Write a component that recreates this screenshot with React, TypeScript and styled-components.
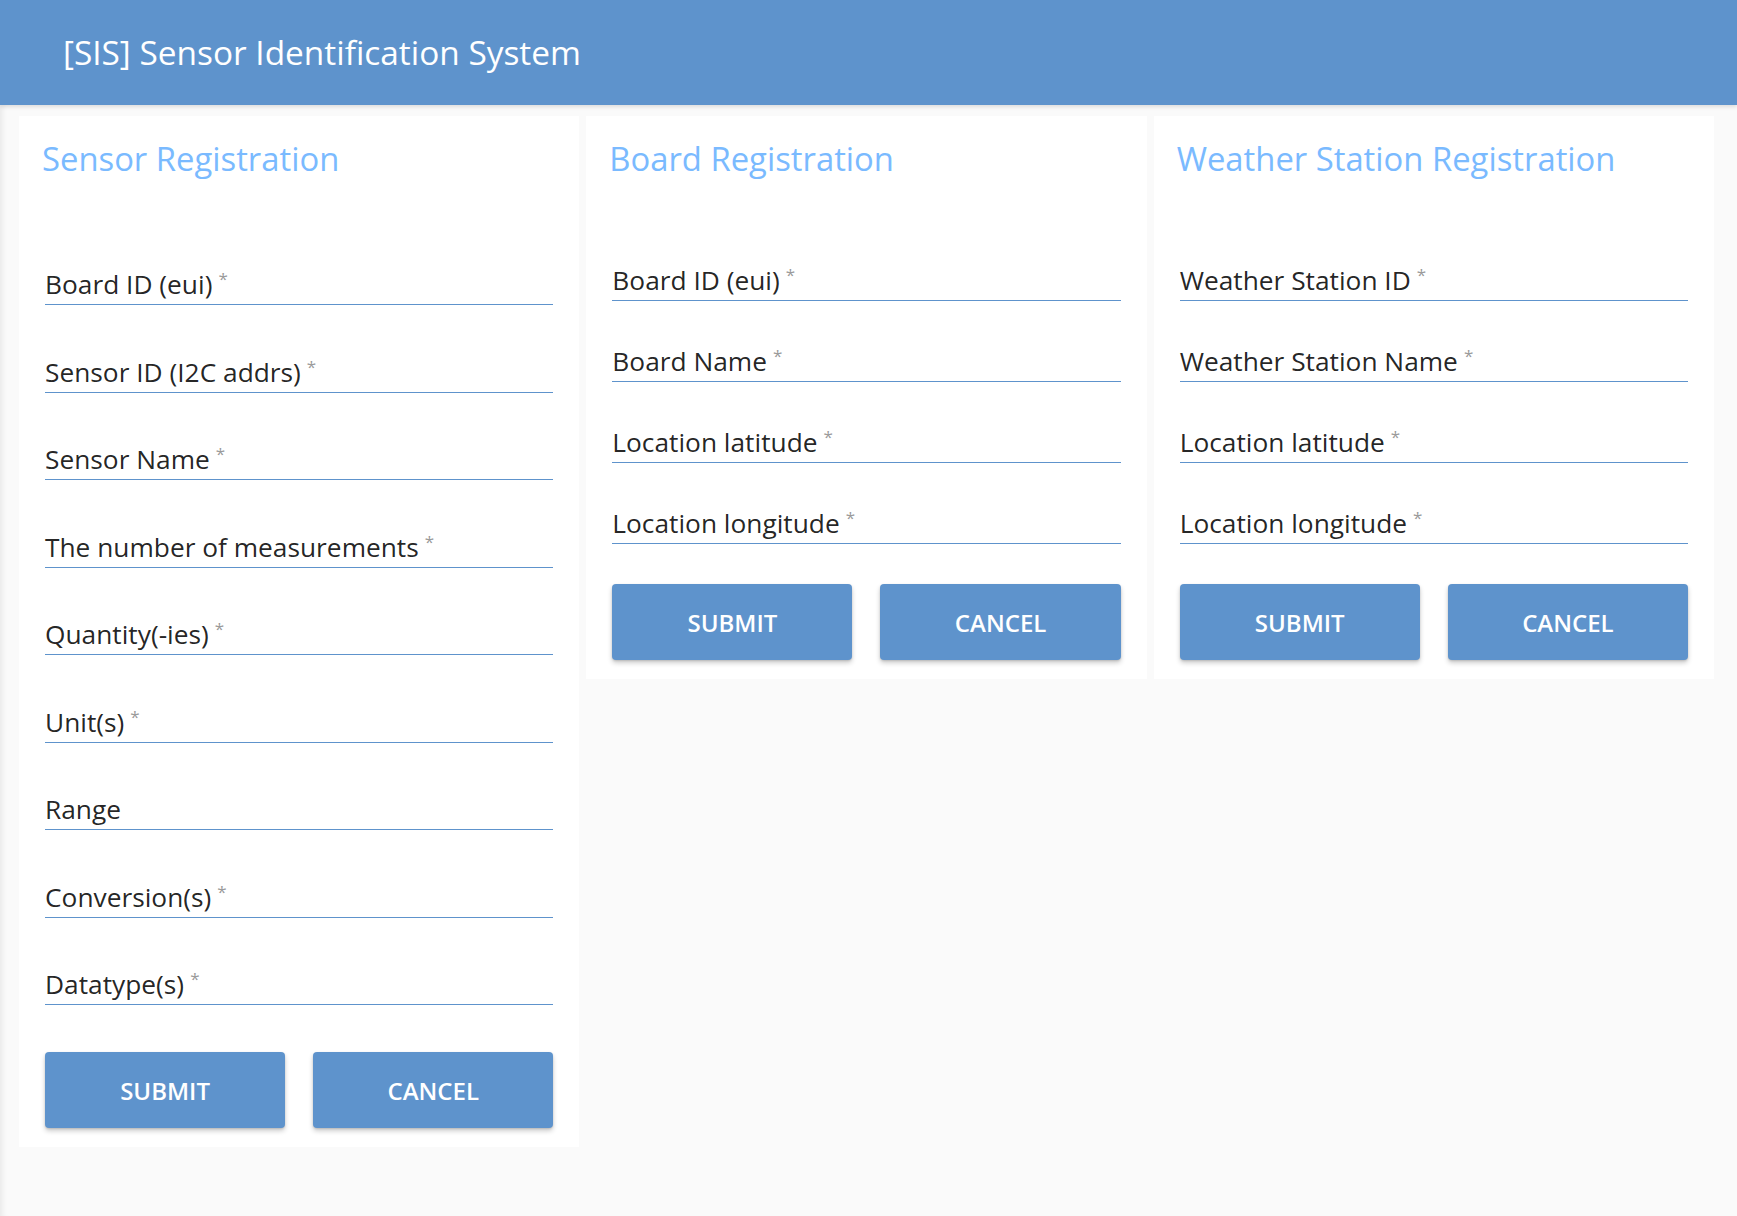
import React from "react";
import styled, { createGlobalStyle } from "styled-components";

const GlobalStyle = createGlobalStyle`
  html, body {
    margin: 0;
    padding: 0;
    background: #fafafa;
    font-family: "Open Sans", "Noto Sans", "Liberation Sans", sans-serif;
  }
  * { box-sizing: border-box; }
`;

const AppBar = styled.header`
  height: 105px;
  background: #5e93cc;
  display: flex;
  align-items: center;
  padding-left: 63px;
  box-shadow: 0 2px 4px rgba(0, 0, 0, 0.12);
  position: relative;
  z-index: 1;
`;

const AppTitle = styled.h1`
  margin: 0;
  color: #ffffff;
  font-size: 33.4px;
  font-weight: 400;
  line-height: 42px;
  padding-bottom: 2px;
`;

const Main = styled.main`
  display: grid;
  grid-template-columns: repeat(3, 1fr);
  align-items: start;
  column-gap: 7px;
  padding: 11px 23px 0 19px;
  min-height: 1111px;
  box-shadow: inset 7px 0 6px -5px rgba(0, 0, 0, 0.08);
`;

const Card = styled.section`
  background: #ffffff;
  padding: 23px 26px 19px;
`;

const CardTitle = styled.h2`
  margin: 0 0 0 -3px;
  color: #7abaff;
  font-size: 32.8px;
  font-weight: 400;
  line-height: 40px;
`;

const FieldList = styled.div<{ $top: number }>`
  display: flex;
  flex-direction: column;
  margin-top: ${(p) => p.$top}px;
`;

const Field = styled.div<{ $h: number }>`
  height: ${(p) => p.$h}px;
  display: flex;
  align-items: flex-end;
  border-bottom: 1px solid #5e93cc;
`;

const Label = styled.label`
  font-size: 26.3px;
  line-height: 36px;
  color: rgba(0, 0, 0, 0.87);
  padding-bottom: 2px;
  white-space: nowrap;
`;

const Req = styled.span`
  color: #9a9a9a;
  font-size: 17px;
  vertical-align: 9px;
  margin-left: 6px;
`;

const Actions = styled.div<{ $top: number }>`
  display: grid;
  grid-template-columns: 1fr 1fr;
  column-gap: 28px;
  margin-top: ${(p) => p.$top}px;
`;

const Button = styled.button`
  height: 76px;
  border: none;
  border-radius: 4px;
  background: #5e93cc;
  color: #ffffff;
  font-family: inherit;
  font-size: 24px;
  font-weight: 600;
  text-transform: uppercase;
  cursor: pointer;
  box-shadow: 0 3px 5px rgba(0, 0, 0, 0.2), 0 1px 2px rgba(0, 0, 0, 0.12);
`;

type FormProps = {
  title: string;
  fields: { label: string; required: boolean }[];
  fieldHeight: number;
  fieldsTop: number;
  actionsTop: number;
};

function RegistrationForm({ title, fields, fieldHeight, fieldsTop, actionsTop }: FormProps) {
  return (
    <Card>
      <CardTitle>{title}</CardTitle>
      <FieldList $top={fieldsTop}>
        {fields.map((f) => (
          <Field key={f.label} $h={fieldHeight}>
            <Label>
              {f.label}
              {f.required && <Req>*</Req>}
            </Label>
          </Field>
        ))}
      </FieldList>
      <Actions $top={actionsTop}>
        <Button>Submit</Button>
        <Button>Cancel</Button>
      </Actions>
    </Card>
  );
}

const req = (label: string, required = true) => ({ label, required });

export default function App() {
  return (
    <>
      <GlobalStyle />
      <AppBar>
        <AppTitle>[SIS] Sensor Identification System</AppTitle>
      </AppBar>
      <Main>
        <RegistrationForm
          title="Sensor Registration"
          fieldHeight={87.5}
          fieldsTop={38.5}
          actionsTop={47}
          fields={[
            req("Board ID (eui)"),
            req("Sensor ID (I2C addrs)"),
            req("Sensor Name"),
            req("The number of measurements"),
            req("Quantity(-ies)"),
            req("Unit(s)"),
            req("Range", false),
            req("Conversion(s)"),
            req("Datatype(s)"),
          ]}
        />
        <RegistrationForm
          title="Board Registration"
          fieldHeight={81}
          fieldsTop={41}
          actionsTop={40}
          fields={[
            req("Board ID (eui)"),
            req("Board Name"),
            req("Location latitude"),
            req("Location longitude"),
          ]}
        />
        <RegistrationForm
          title="Weather Station Registration"
          fieldHeight={81}
          fieldsTop={41}
          actionsTop={40}
          fields={[
            req("Weather Station ID"),
            req("Weather Station Name"),
            req("Location latitude"),
            req("Location longitude"),
          ]}
        />
      </Main>
    </>
  );
}
